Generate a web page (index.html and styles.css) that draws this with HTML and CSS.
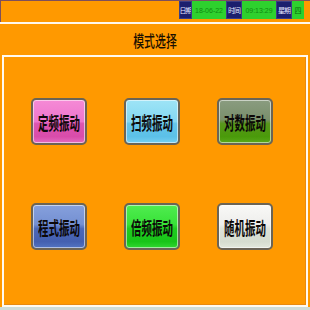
FILE: index.html
```html
<!DOCTYPE html>
<html>
<head>
<meta charset="utf-8">
<link rel="stylesheet" href="styles.css">
</head>
<body>
<div class="screen">
  <div class="topbar">
    <div class="status">
      <span class="lbl first">日期</span>
      <span class="val wide">18-06-22</span>
      <span class="lbl">时间</span>
      <span class="val wide">09:13:29</span>
      <span class="lbl">星期</span>
      <span class="val narrow">四</span>
    </div>
  </div>
  <div class="sep"></div>
  <div class="header"><span class="title">模式选择</span></div>
  <div class="panel">
    <div class="grid">
      <div class="btn pink"><span class="txt">定频振动</span></div>
      <div class="btn cyan"><span class="txt">扫频振动</span></div>
      <div class="btn olive"><span class="txt">对数振动</span></div>
      <div class="btn blue"><span class="txt">程式振动</span></div>
      <div class="btn green"><span class="txt">倍频振动</span></div>
      <div class="btn white"><span class="txt">随机振动</span></div>
    </div>
  </div>
</div>
</body>
</html>
```

FILE: styles.css
```css
html, body {
  margin: 0;
  padding: 0;
}
body {
  background: #d6e0dc;
  font-family: "Noto Sans CJK SC", sans-serif;
}
.screen {
  width: 310px;
  height: 310px;
  background: #ff9900;
  display: flex;
  flex-direction: column;
  overflow: hidden;
  border-bottom: 3px solid #cfdcd8;
  box-sizing: border-box;
}
.topbar {
  height: 22px;
  box-sizing: border-box;
  border-top: 1px solid #7e4f5c;
  border-left: 1px solid #7e4f5c;
  display: flex;
  justify-content: flex-end;
  padding-right: 6px;
}
.status {
  display: flex;
  height: 18px;
}
.lbl, .val {
  display: flex;
  align-items: center;
  justify-content: center;
  height: 18px;
  box-sizing: border-box;
  overflow: hidden;
  white-space: nowrap;
}
.lbl {
  width: 16px;
  background: #1c1f6e;
  color: #e8e8ff;
  font-size: 7px;
  letter-spacing: -1px;
  border: 1px solid #3a3d86;
}
.lbl.first { width: 13px; }
.val {
  background: #2ed12e;
  color: #108a10;
  font-family: "Liberation Sans", sans-serif;
  font-size: 7px;
}
.val.wide { width: 34px; }
.val.narrow {
  width: 12px;
  font-family: "Noto Sans CJK SC", sans-serif;
  color: #0a6a0a;
}
.sep {
  height: 2px;
  background: #fff8ee;
}
.header {
  height: 31px;
  display: flex;
  align-items: center;
  justify-content: center;
}
.title {
  font-size: 16px;
  font-weight: 500;
  color: #1a1000;
  display: inline-block;
  transform: scaleX(0.68);
  white-space: nowrap;
  line-height: 1;
}
.panel {
  margin: 0 2px 0 2px;
  height: 252px;
  box-sizing: border-box;
  border: 2px solid #fffaf0;
  box-shadow: inset -1px -1px 0 #e88a10;
}
.grid {
  display: grid;
  grid-template-columns: 56px 56px 56px;
  grid-auto-rows: 47px;
  column-gap: 37px;
  row-gap: 58px;
  padding: 41px 0 0 27px;
}
.btn {
  box-sizing: border-box;
  border: 2px solid #6b6455;
  border-radius: 5px;
  display: flex;
  align-items: center;
  justify-content: center;
  overflow: hidden;
  box-shadow: inset 0 0 0 1px rgba(255,255,255,0.55);
}
.txt {
  font-size: 18px;
  font-weight: 700;
  color: #0c0808;
  display: inline-block;
  transform: scaleX(0.58);
  white-space: nowrap;
  line-height: 1;
}
.pink {
  background: linear-gradient(#f58ad6 0%, #ee76cc 50%, #dc55b0 55%, #d94caa 85%, #e46cc0 100%);
}
.cyan {
  background: linear-gradient(#9ee4f6 0%, #84d8f2 50%, #66c6ea 55%, #5cc0e8 85%, #76d0f0 100%);
}
.olive {
  background: linear-gradient(#8a9c80 0%, #7a8f6c 45%, #58961c 55%, #4a9a0a 85%, #5aaa1a 100%);
}
.blue {
  background: linear-gradient(#86a0dc 0%, #7490d2 45%, #4c68b8 55%, #4460b0 85%, #5274c2 100%);
}
.green {
  background: linear-gradient(#50ec50 0%, #38e238 45%, #20cc20 55%, #18c418 85%, #30d830 100%);
}
.white {
  background: linear-gradient(#f8f8f6 0%, #eeeeec 45%, #dde2d8 55%, #d6ddd0 85%, #e2e8dc 100%);
}
```
